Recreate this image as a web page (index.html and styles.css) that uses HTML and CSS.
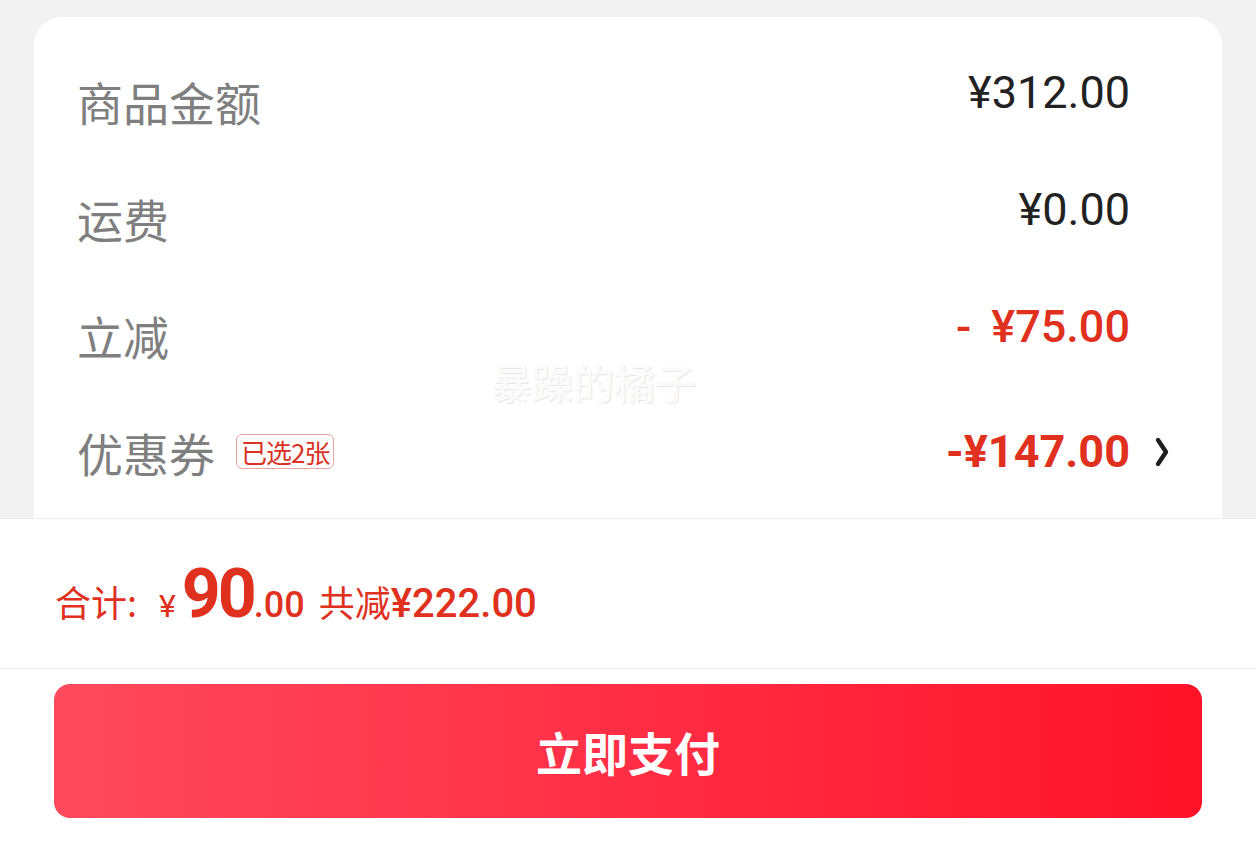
FILE: index.html
```html
<!DOCTYPE html>
<html lang="zh-CN">
  <head>
    <meta charset="UTF-8" />
    <meta name="viewport" content="width=device-width, initial-scale=1.0" />
    <title>订单结算</title>
    <link rel="stylesheet" href="styles.css">
  </head>

  <body>
    <!-- 金额明细 -->
    <div class="detail">
      <div class="card">
        <div class="row">
          <span class="label">商品金额</span>
          <span class="value up">¥312.00</span>
          <span class="more"></span>
        </div>
        <div class="row">
          <span class="label">运费</span>
          <span class="value up">¥0.00</span>
          <span class="more"></span>
        </div>
        <div class="row">
          <span class="label">立减</span>
          <span class="value red mid up"><i class="minus">-</i>¥75.00</span>
          <span class="more"></span>
        </div>
        <div class="row">
          <span class="label">优惠券</span>
          <span class="tag">已选2张</span>
          <span class="value red bold">-¥147.00</span>
          <span class="more">
            <svg width="16" height="32" viewBox="0 0 16 32">
              <path d="M4 4 L12 16 L4 28" fill="none" stroke="#1e1e1e" stroke-width="4.4" stroke-linecap="round" stroke-linejoin="round"/>
            </svg>
          </span>
        </div>
      </div>
    </div>

    <!-- 水印 -->
    <div class="mark">暴躁的橘子</div>

    <!-- 底部结算栏 -->
    <footer class="bar">
      <div class="total">
        <span class="t-label">合计:</span>
        <span class="t-yen">¥</span><span class="t-int">90</span><span class="t-dec">.00</span>
        <span class="t-cut">共减<em>¥222.00</em></span>
      </div>
      <div class="pay">
        <button class="btn">立即支付</button>
      </div>
    </footer>
  </body>
</html>
```

FILE: styles.css
```css
html, body{
  margin: 0;
  padding: 0;
}

body{
  position: relative;
  width: 1256px;
  height: 860px;
  overflow: hidden;
  background-color: #f2f2f2;
  font-family: Roboto, "Noto Sans CJK SC", sans-serif;
}

/* 明细区域 */
.detail{
  height: 518px;
  overflow: hidden;
  padding: 17px 34px 0;
  box-sizing: border-box;
}

.card{
  background-color: #fff;
  border-radius: 28px;
  padding: 25px 52px 60px 43px;
}

.row{
  display: flex;
  align-items: center;
  height: 117px;
}

.label{
  font-family: "Noto Sans CJK SC", sans-serif;
  font-size: 46px;
  color: #7f7f7f;
}

.tag{
  margin-left: 21px;
  padding: 0 4px;
  height: 33px;
  line-height: 33px;
  border: 1px solid #e6a49c;
  border-radius: 6px;
  font-family: "Noto Sans CJK SC", sans-serif;
  font-size: 26px;
  color: #d93224;
  letter-spacing: -1px;
}

.value{
  margin-left: auto;
  font-size: 45px;
  font-weight: 400;
  color: #222;
}

.value.up{
  margin-bottom: 16px;
}

.value.red{
  color: #e0301e;
}

.value.mid{
  font-weight: 500;
}

.value.bold{
  font-weight: 700;
}

.minus{
  font-style: normal;
  margin-right: 20px;
}

.more{
  display: flex;
  justify-content: flex-end;
  align-items: center;
  width: 40px;
  height: 40px;
}

/* 水印 */
.mark{
  position: absolute;
  top: 356px;
  left: 491px;
  font-family: "Noto Sans CJK SC", sans-serif;
  font-size: 41px;
  font-weight: 500;
  line-height: 50px;
  color: #fbfbfb;
  text-shadow: 1px 1px 1px rgba(0,0,0,.10);
}

/* 底部结算栏 */
.bar{
  background-color: #fff;
  border-top: 1px solid #ececec;
}

.total{
  display: flex;
  align-items: baseline;
  height: 150px;
  padding: 35px 55px 0;
  box-sizing: border-box;
  color: #e0301e;
  border-bottom: 1px solid #ececec;
}

.t-label{
  font-family: "Noto Sans CJK SC", sans-serif;
  font-size: 36px;
  margin-right: 22px;
}

.t-yen{
  font-size: 32px;
  margin-right: 6px;
}

.t-int{
  font-size: 68px;
  font-weight: 700;
  letter-spacing: -3px;
}

.t-dec{
  font-size: 36px;
  font-weight: 500;
}

.t-cut{
  margin-left: 14px;
  font-family: "Noto Sans CJK SC", sans-serif;
  font-size: 36px;
}

.t-cut em{
  font-style: normal;
  font-family: Roboto, sans-serif;
  font-size: 40px;
  font-weight: 500;
}

.pay{
  padding: 15px 54px 45px;
}

.btn{
  display: block;
  width: 100%;
  height: 134px;
  border: none;
  border-radius: 16px;
  background: linear-gradient(to right, #ff4a5d, #ff3148 45%, #ff1329);
  color: #fff;
  font-family: "Noto Sans CJK SC", sans-serif;
  font-size: 46px;
  font-weight: 700;
}
```
